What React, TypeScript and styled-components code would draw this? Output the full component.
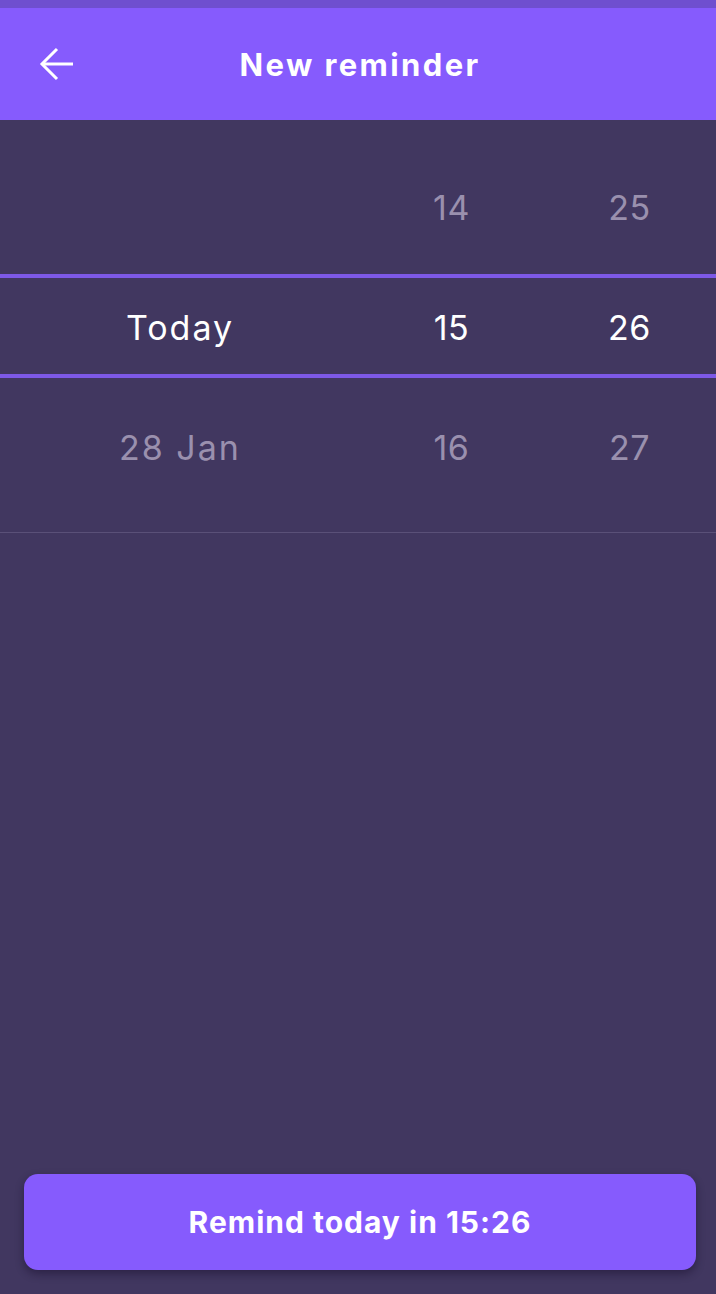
import React from "react";
import styled, { createGlobalStyle } from "styled-components";

const Global = createGlobalStyle`
  html, body { margin: 0; padding: 0; background: #413760; }
  * { box-sizing: border-box; }
  body { font-family: "Inter", "Noto Sans", sans-serif; }
`;

const Screen = styled.div`
  min-height: 1294px;
  display: flex;
  flex-direction: column;
  background: #413760;
`;

const StatusBar = styled.div`
  height: 8px;
  background: #6f4fcf;
`;

const Header = styled.header`
  height: 112px;
  background: #865bfd;
  display: grid;
  grid-template-columns: 112px 1fr 112px;
  align-items: center;
`;

const BackButton = styled.button`
  border: 0;
  background: transparent;
  padding: 0;
  margin-left: 38px;
  width: 38px;
  height: 36px;
  display: flex;
  align-items: center;
  justify-content: center;
  color: #fff;
  cursor: pointer;
`;

const Title = styled.h1`
  margin: 0;
  padding-left: 4px;
  text-align: center;
  color: #fff;
  font-size: 31px;
  font-weight: 700;
  letter-spacing: 2.4px;
`;

const Picker = styled.section`
  position: relative;
  padding: 27px 0 25px;
  border-bottom: 1px solid #5a5078;
`;

const Band = styled.div`
  position: absolute;
  left: 0;
  right: 0;
  top: 154px;
  height: 104px;
  border-top: 4px solid #7d59e6;
  border-bottom: 4px solid #7d59e6;
  pointer-events: none;
`;

const Row = styled.div`
  height: 120px;
  display: grid;
  grid-template-columns: 360px 180px 1fr;
  align-items: center;
`;

const Cell = styled.div<{ $active?: boolean; $num?: boolean }>`
  text-align: center;
  font-size: 34px;
  font-weight: 400;
  letter-spacing: ${(p) => (p.$num ? "0.5px" : "2px")};
  padding-left: ${(p) => (p.$num ? "3px" : "0")};
  color: ${(p) => (p.$active ? "#ffffff" : "#9a90ae")};
`;

const Spacer = styled.div`
  flex: 1;
`;

const Footer = styled.div`
  padding: 0 20px 24px 24px;
`;

const RemindButton = styled.button`
  width: 100%;
  height: 96px;
  border: 0;
  border-radius: 14px;
  background: #865bfd;
  color: #fff;
  font-family: "Inter", "Noto Sans", sans-serif;
  font-size: 30px;
  font-weight: 700;
  letter-spacing: 1px;
  box-shadow: 0 4px 8px rgba(20, 10, 40, 0.45);
  cursor: pointer;
`;

const rows = [
  { date: "", hour: "14", minute: "25", active: false },
  { date: "Today", hour: "15", minute: "26", active: true },
  { date: "28 Jan", hour: "16", minute: "27", active: false },
];

export default function App() {
  return (
    <Screen>
      <Global />
      <StatusBar />
      <Header>
        <BackButton aria-label="Back">
          <svg width="36" height="34" viewBox="0 0 36 34" fill="none">
            <path d="M34 17H4" stroke="currentColor" strokeWidth="3" />
            <path d="M18 2L3 17L18 32" stroke="currentColor" strokeWidth="3" />
          </svg>
        </BackButton>
        <Title>New reminder</Title>
        <div />
      </Header>
      <Picker>
        <Band />
        {rows.map((r, i) => (
          <Row key={i}>
            <Cell $active={r.active}>{r.date}</Cell>
            <Cell $active={r.active} $num>{r.hour}</Cell>
            <Cell $active={r.active} $num>{r.minute}</Cell>
          </Row>
        ))}
      </Picker>
      <Spacer />
      <Footer>
        <RemindButton>Remind today in 15:26</RemindButton>
      </Footer>
    </Screen>
  );
}
